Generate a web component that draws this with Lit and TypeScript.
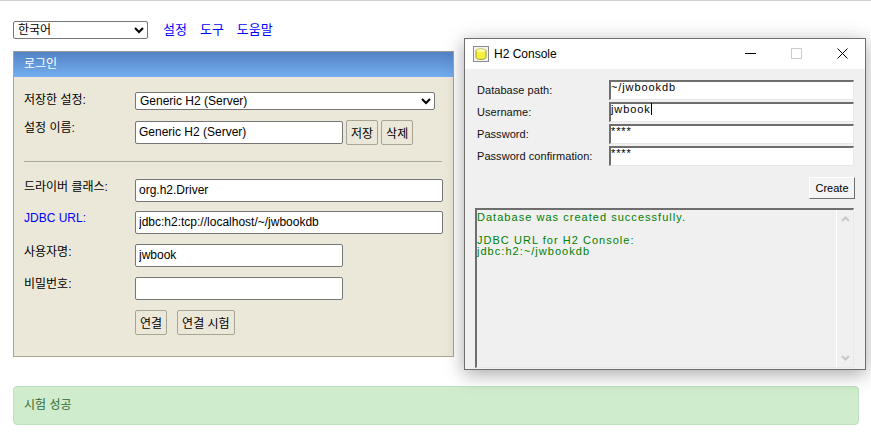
import { LitElement, html, css } from "lit";
import { customElement } from "lit/decorators.js";

@customElement("app-root")
export class AppRoot extends LitElement {
  static styles = css`
    :host {
      display: block;
      position: relative;
      width: 871px;
      height: 433px;
      overflow: hidden;
      background: #fff;
      border-top: 1px solid #d0d0d0;
      box-sizing: border-box;
      font-family: "Liberation Sans", "Noto Sans CJK KR", sans-serif;
      font-size: 12px;
      color: #000;
    }
    .page { padding: 20px 12px 0 13px; display: flex; flex-direction: column; }
    .top { display: flex; align-items: center; height: 18px; gap: 15px; }
    .lang {
      width: 135px; height: 18px; box-sizing: border-box; font: inherit; font-size: 12px;
      background: #fff; border: 1px solid #767676; border-radius: 2px; padding: 0; margin: 0;
    }
    .top a { color: #0000ff; text-decoration: none; font-size: 13px; padding-bottom: 4px; }
    .links { display: flex; gap: 13px; }
    .panel {
      margin-top: 12px; width: 441px; height: 306px; box-sizing: border-box;
      background: #ece8d9; border: 1px solid #a9a594; border-top-color: #9a9a9a;
    }
    .head {
      height: 25px; box-sizing: border-box; padding: 0 0 5px 10px; display: flex; align-items: center;
      background: linear-gradient(#5382c4, #74aef0);
      color: #fff; font-size: 12px;
    }
    .form { padding: 15px 10px 0 10px; display: flex; flex-direction: column; }
    .row { display: flex; align-items: flex-start; }
    .gap9 { margin-top: 9px; }
    .gap10 { margin-top: 10px; }
    .gap11 { margin-top: 11px; }
    .row label { width: 111px; flex: none; font-size: 12px; line-height: 14px; }
    .row label.low { padding-top: 1px; }
    .blue { color: #0000ff; }
    input.txt {
      height: 23px; box-sizing: border-box; border: 1px solid #767676; border-radius: 2px;
      background: #fff; font: inherit; font-size: 12px; padding: 0 3px 1px; margin: 0; color: #000;
    }
    .w208 { width: 208px; }
    .w308 { width: 308px; }
    select.sv {
      width: 300px; height: 18px; box-sizing: border-box; border: 1px solid #767676; border-radius: 2px;
      background: #fff; font: inherit; font-size: 12px; padding: 0; margin: 0;
    }
    .btn {
      height: 25px; box-sizing: border-box; border: 1px solid #a9a594; border-radius: 2px;
      background: #ece8d9; font: inherit; font-size: 12px; padding: 0 4px; margin: 0; color: #000;
    }
    .acts { display: flex; gap: 3px; margin-left: 3px; margin-top: -1px; }
    .acts2 { display: flex; gap: 10px; margin-left: 111px; margin-top: 10px; }
    .rule { height: 1px; background: #a9a9a0; margin: 16px 0 17px 0; width: 418px; }
    .alert {
      margin-top: 29px; height: 39px; width: 846px; box-sizing: border-box;
      background: #cfeccd; border: 1px solid #bfe0bd; border-radius: 4px; color: #2f6b35;
      padding: 0 0 5px 10px; display: flex; align-items: center; font-size: 12px;
    }
    .win {
      position: absolute; left: 464px; top: 37px; width: 402px; height: 332px; box-sizing: border-box;
      background: #f0f0f0; border: 1px solid #6e6e6e;
      box-shadow: 0 4px 18px rgba(0,0,0,.35);
      display: flex; flex-direction: column;
    }
    .tbar { height: 30px; background: #fff; display: flex; align-items: center; flex: none; padding-left: 8px; }
    .tbar .title { font-size: 12px; margin-left: 5px; flex: 1; padding-bottom: 1px; }
    .ctl { width: 46px; display: flex; align-items: center; justify-content: center; padding-bottom: 1px; }
    .wbody { padding: 10px 11px 0 12px; display: flex; flex-direction: column; flex: 1; min-height: 0; }
    .wrow { display: flex; align-items: center; height: 22px; }
    .wrow label { width: 132px; flex: none; font-size: 11px; letter-spacing: .05px; color: #111; }
    .sunk {
      flex: 1; height: 20px; box-sizing: border-box; background: #fff;
      border: 1px solid; border-color: #6e6e6e #e8e8e8 #e8e8e8 #6e6e6e;
      border-top-width: 2px; border-left-width: 2px;
      font-size: 11px; letter-spacing: .9px; line-height: 11px; color: #000;
    }
    .caret { border-right: 1px solid #000; }
    .cbar { display: flex; justify-content: flex-end; margin-top: 10px; margin-right: -1px; }
    .create {
      width: 46px; height: 22px; box-sizing: border-box; background: #f4f4f4; font: inherit; font-size: 11px;
      border: 1px solid; border-color: #fff #6e6e6e #6e6e6e #fff; padding: 0; color: #000;
    }
    .out {
      margin: 9px 0 1px -2px; flex: 1; min-height: 0; display: flex; box-sizing: border-box;
      border: 1px solid; border-color: #6e6e6e #e8e8e8 #e8e8e8 #6e6e6e; border-top-width: 2px; border-left-width: 2px;
    }
    .log {
      flex: 1; margin: 0; padding: 2px 0 0; color: #008000; font-size: 11px; letter-spacing: 1.03px;
      line-height: 11.3px; font-family: "Liberation Sans", sans-serif; white-space: pre;
    }
    .sb {
      width: 16px; flex: none; border-left: 1px solid #fff; display: flex; flex-direction: column;
      justify-content: space-between; align-items: center; padding: 6px 0;
    }
  `;

  render() {
    return html`
      <div class="page">
        <div class="top">
          <select class="lang"><option>한국어</option></select>
          <div class="links"><a>설정</a><a>도구</a><a>도움말</a></div>
        </div>
        <div class="panel">
          <div class="head">로그인</div>
          <div class="form">
            <div class="row"><label class="low">저장한 설정:</label><select class="sv"><option>Generic H2 (Server)</option></select></div>
            <div class="row gap11">
              <label>설정 이름:</label><input class="txt w208" value="Generic H2 (Server)" />
              <div class="acts"><button class="btn">저장</button><button class="btn">삭제</button></div>
            </div>
            <div class="rule"></div>
            <div class="row"><label class="low">드라이버 클래스:</label><input class="txt w308" value="org.h2.Driver" /></div>
            <div class="row gap9"><label class="blue">JDBC URL:</label><input class="txt w308" value="jdbc:h2:tcp://localhost/~/jwbookdb" /></div>
            <div class="row gap10"><label class="low">사용자명:</label><input class="txt w208" value="jwbook" /></div>
            <div class="row gap10"><label>비밀번호:</label><input class="txt w208" /></div>
            <div class="acts2"><button class="btn">연결</button><button class="btn">연결 시험</button></div>
          </div>
        </div>
        <div class="alert">시험 성공</div>
      </div>
      <div class="win">
        <div class="tbar">
          <svg width="16" height="16" viewBox="0 0 16 16">
            <rect x=".5" y=".5" width="15" height="15" fill="#f4f4f4" stroke="#8a8a8a"/>
            <path d="M3 4.5C3 2.5 13 2.5 13 4.5V11.5C13 14 3 14 3 11.5Z" fill="#f6f23c" stroke="#a09a28"/>
            <ellipse cx="8" cy="4.5" rx="4.5" ry="1.5" fill="#fdfca8"/>
          </svg>
          <span class="title">H2 Console</span>
          <span class="ctl"><svg width="11" height="11" viewBox="0 0 11 11"><path d="M0 5.5H11" stroke="#000"/></svg></span>
          <span class="ctl"><svg width="11" height="11" viewBox="0 0 11 11"><rect x=".5" y=".5" width="10" height="10" fill="none" stroke="#ccc"/></svg></span>
          <span class="ctl"><svg width="11" height="11" viewBox="0 0 11 11"><path d="M.5 .5L10.5 10.5M10.5 .5L.5 10.5" stroke="#000"/></svg></span>
        </div>
        <div class="wbody">
          <div class="wrow"><label>Database path:</label><div class="sunk">~/jwbookdb</div></div>
          <div class="wrow"><label>Username:</label><div class="sunk"><span class="caret">jwbook</span></div></div>
          <div class="wrow"><label>Password:</label><div class="sunk">****</div></div>
          <div class="wrow"><label>Password confirmation:</label><div class="sunk">****</div></div>
          <div class="cbar"><button class="create">Create</button></div>
          <div class="out">
            <pre class="log">Database was created successfully.

JDBC URL for H2 Console:
jdbc:h2:~/jwbookdb</pre>
            <div class="sb">
              <svg width="9" height="6" viewBox="0 0 9 6"><path d="M1 5L4.5 1.5L8 5" fill="none" stroke="#c8c8c8" stroke-width="2"/></svg>
              <svg width="9" height="6" viewBox="0 0 9 6"><path d="M1 1L4.5 4.5L8 1" fill="none" stroke="#c8c8c8" stroke-width="2"/></svg>
            </div>
          </div>
        </div>
      </div>
    `;
  }
}
